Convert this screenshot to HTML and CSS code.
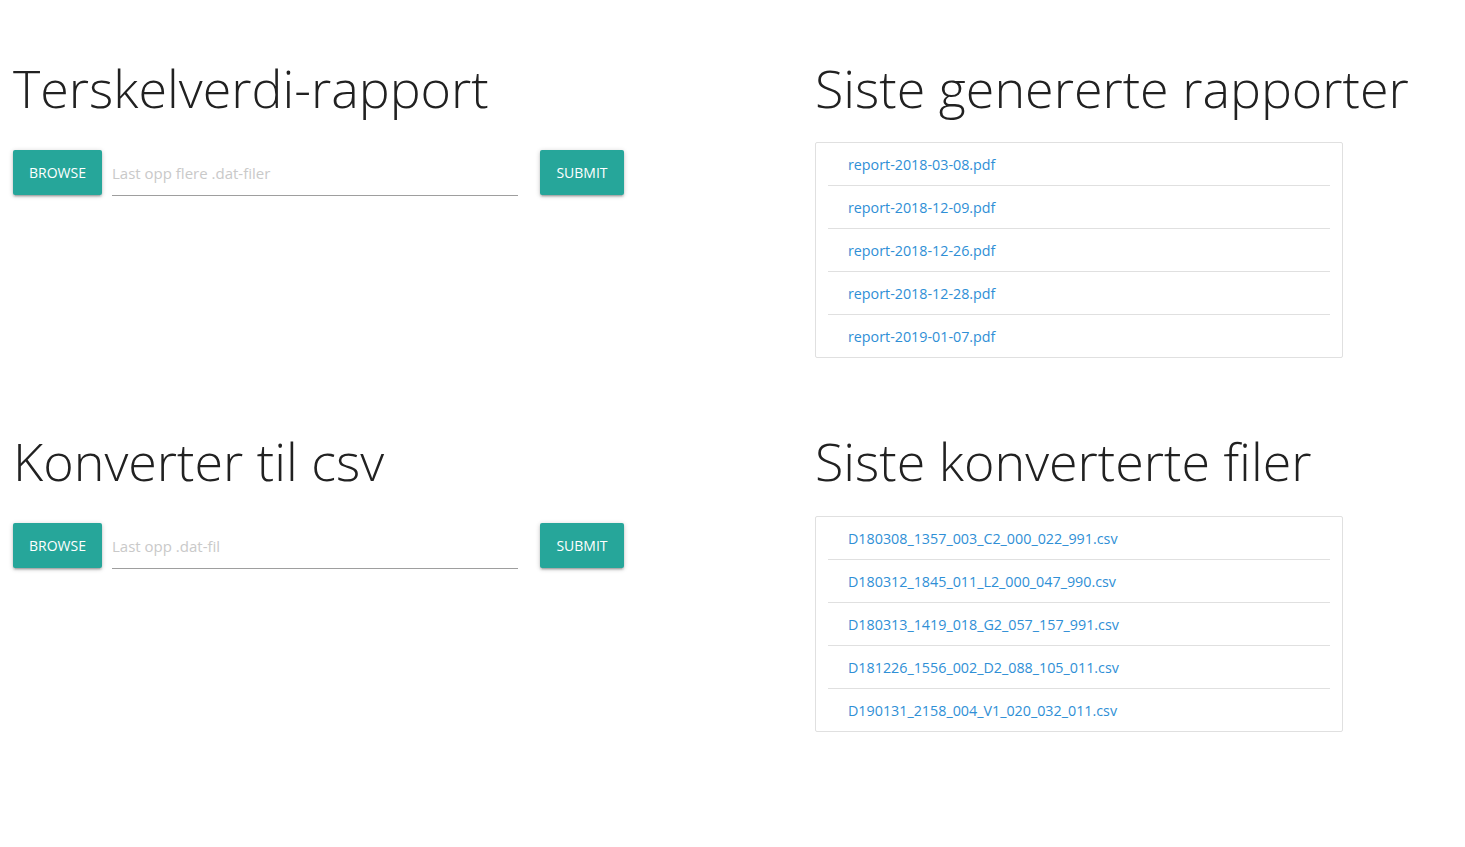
FILE: index.html
```html
<!DOCTYPE html>
<html lang="no">
<head>
<meta charset="utf-8">
<title>Rapporter</title>
<link rel="stylesheet" href="styles.css">
</head>
<body>
<main class="page">
  <section class="row">
    <div class="col-left">
      <h3 class="title">Terskelverdi-rapport</h3>
      <form class="upload">
        <button type="button" class="btn">BROWSE</button>
        <div class="field"><span class="placeholder">Last opp flere .dat-filer</span></div>
        <button type="button" class="btn btn-submit">SUBMIT</button>
      </form>
    </div>
    <div class="col-right">
      <h3 class="title">Siste genererte rapporter</h3>
      <ul class="collection">
        <li><a href="#">report-2018-03-08.pdf</a></li>
        <li><a href="#">report-2018-12-09.pdf</a></li>
        <li><a href="#">report-2018-12-26.pdf</a></li>
        <li><a href="#">report-2018-12-28.pdf</a></li>
        <li><a href="#">report-2019-01-07.pdf</a></li>
      </ul>
    </div>
  </section>
  <section class="row">
    <div class="col-left">
      <h3 class="title">Konverter til csv</h3>
      <form class="upload">
        <button type="button" class="btn">BROWSE</button>
        <div class="field"><span class="placeholder">Last opp .dat-fil</span></div>
        <button type="button" class="btn btn-submit">SUBMIT</button>
      </form>
    </div>
    <div class="col-right">
      <h3 class="title">Siste konverterte filer</h3>
      <ul class="collection collection-2">
        <li><a href="#">D180308_1357_003_C2_000_022_991.csv</a></li>
        <li><a href="#">D180312_1845_011_L2_000_047_990.csv</a></li>
        <li><a href="#">D180313_1419_018_G2_057_157_991.csv</a></li>
        <li><a href="#">D181226_1556_002_D2_088_105_011.csv</a></li>
        <li><a href="#">D190131_2158_004_V1_020_032_011.csv</a></li>
      </ul>
    </div>
  </section>
</main>
</body>
</html>
```
FILE: styles.css
```css
html, body {
  margin: 0;
  padding: 0;
  background: #fff;
}
body {
  font-family: "Open Sans", "Noto Sans", sans-serif;
  color: #212121;
}
.page {
  padding: 0 0 0 13px;
}
.row {
  display: grid;
  grid-template-columns: 802px 1fr;
  height: 373px;
}
.title {
  font-weight: 300;
  font-size: 52px;
  line-height: 60px;
  margin: 58px 0 0 0;
  color: #212121;
}
.upload {
  display: flex;
  align-items: flex-start;
  margin-top: 32px;
}
.btn {
  height: 45px;
  border: none;
  border-radius: 2px;
  background: #26a69a;
  color: #fff;
  font-family: "Open Sans", sans-serif;
  font-size: 14px;
  padding: 0 14px;
  width: 89px;
  box-shadow: 0 2px 2px 0 rgba(0,0,0,0.14), 0 3px 1px -2px rgba(0,0,0,0.12), 0 1px 5px 0 rgba(0,0,0,0.2);
}
.btn-submit {
  width: 84px;
  margin-left: 22px;
}
.field {
  width: 406px;
  margin-left: 10px;
  height: 45px;
  border-bottom: 1px solid #9e9e9e;
  display: flex;
  align-items: center;
}
.placeholder {
  color: #c9c9c9;
  font-size: 15px;
}
.collection {
  list-style: none;
  margin: 24px 0 0 0;
  padding: 0 12px;
  width: 502px;
  border: 1px solid #e0e0e0;
  border-radius: 2px;
}
.collection-2 {
  margin-top: 25px;
}
.collection li {
  height: 43px;
  display: flex;
  align-items: center;
  border-bottom: 1px solid #e0e0e0;
  padding-left: 20px;
  box-sizing: border-box;
}
.collection li:last-child {
  border-bottom: none;
  height: 42px;
}
.collection a {
  color: #2f8fd6;
  text-decoration: none;
  font-size: 14.3px;
}
```
